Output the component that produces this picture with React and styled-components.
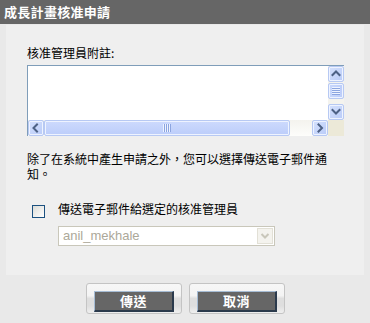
import React from "react";
import styled, { createGlobalStyle } from "styled-components";

const Global = createGlobalStyle`
  html, body { margin: 0; padding: 0; background: #e9e9e9; }
  body { font-family: "Noto Sans CJK TC", "Liberation Sans", sans-serif; }
  * { box-sizing: border-box; }
`;

const Page = styled.div`
  width: 370px;
  height: 323px;
  background: #e9e9e9;
  display: flex;
  flex-direction: column;
`;

const Header = styled.div`
  height: 24px;
  background: #666666;
  color: #ffffff;
  font-weight: bold;
  font-size: 13px;
  line-height: 24px;
  padding-left: 4px;
  letter-spacing: 0.3px;
`;

const Body = styled.div`
  padding: 1px 6px 0 6px;
`;

const Panel = styled.div`
  height: 250px;
  background: #efefef;
  padding: 20px 0 0 21px;
  display: flex;
  flex-direction: column;
`;

const Label = styled.div`
  font-size: 12px;
  line-height: 16px;
  color: #000;
  margin-bottom: 4px;
`;

const TextBox = styled.div`
  display: grid;
  grid-template-columns: 300px 16px;
  grid-template-rows: 54px 16px;
  width: 317px;
  border-top: 1px solid #7f9db9;
  border-left: 1px solid #7f9db9;
  background: #ffffff;
`;

const TextArea = styled.div`
  background: #ffffff;
`;

const VBar = styled.div`
  display: flex;
  flex-direction: column;
  background: #f4f3ee;
`;

const HBar = styled.div`
  display: flex;
  background: linear-gradient(#f4f3ee, #fdfdfb);
`;

const Corner = styled.div`
  background: #ece9d8;
`;

const SBtn = styled.div`
  width: 16px;
  height: 16px;
  flex: none;
  border-radius: 2px;
  border: 1px solid #b7c9f3;
  box-shadow: inset 0 0 0 1px #eef3ff;
  background: linear-gradient(135deg, #d5e1fd, #b9cbf8);
  display: flex;
  align-items: center;
  justify-content: center;
`;

const Thumb = styled.div`
  flex: none;
  ${(p) => (p.$vertical ? "height: 16px; margin-top: 1px;" : "width: 246px;")}
  border-radius: 2px;
  border: 1px solid #b7c9f3;
  box-shadow: inset 0 0 0 1px #eef3ff;
  background: ${(p) =>
    p.$vertical
      ? "linear-gradient(90deg, #c9d8fc, #bccdfa)"
      : "linear-gradient(#cddafd, #bccdfa)"};
  display: flex;
  align-items: center;
  justify-content: center;
`;

const Track = styled.div`
  flex: 1;
`;

const Grip = ({ vertical }) =>
  vertical ? (
    <svg width="8" height="8" viewBox="0 0 8 8">
      {[0, 2, 4, 6].map((y) => (
        <line key={y} x1="0" x2="8" y1={y + 0.5} y2={y + 0.5} stroke="#eef3ff" strokeWidth="1" />
      ))}
      {[1, 3, 5, 7].map((y) => (
        <line key={y} x1="0" x2="8" y1={y + 0.5} y2={y + 0.5} stroke="#8ca5e0" strokeWidth="1" />
      ))}
    </svg>
  ) : (
    <svg width="8" height="8" viewBox="0 0 8 8">
      {[0, 2, 4, 6].map((x) => (
        <line key={x} y1="0" y2="8" x1={x + 0.5} x2={x + 0.5} stroke="#eef3ff" strokeWidth="1" />
      ))}
      {[1, 3, 5, 7].map((x) => (
        <line key={x} y1="0" y2="8" x1={x + 0.5} x2={x + 0.5} stroke="#8ca5e0" strokeWidth="1" />
      ))}
    </svg>
  );

const Arrow = ({ dir }) => {
  const paths = {
    up: "M1.5 6 L5 2.5 L8.5 6",
    down: "M1.5 3 L5 6.5 L8.5 3",
    left: "M6 1.5 L2.5 5 L6 8.5",
    right: "M3.5 1.5 L7 5 L3.5 8.5",
  };
  return (
    <svg width="10" height="10" viewBox="0 0 10 10">
      <path d={paths[dir]} fill="none" stroke="#4d6185" strokeWidth="2" strokeLinecap="square" />
    </svg>
  );
};

const Para = styled.p`
  margin: 15px 0 0 0;
  width: 305px;
  font-size: 12px;
  line-height: 15px;
  color: #000;
`;

const CheckRow = styled.div`
  display: flex;
  align-items: flex-start;
  margin-top: 21px;
  padding-left: 5px;
`;

const Check = styled.div`
  width: 13px;
  height: 13px;
  flex: none;
  margin-top: 3px;
  border: 1px solid #1c5180;
  background: linear-gradient(135deg, #dcdcd7, #ffffff);
`;

const CheckCol = styled.div`
  margin-left: 13px;
  display: flex;
  flex-direction: column;
`;

const CheckLabel = styled.div`
  font-size: 12px;
  line-height: 14px;
  color: #000;
`;

const Select = styled.div`
  margin-top: 10px;
  width: 217px;
  height: 20px;
  border: 1px solid #c9c7ba;
  background: #ffffff;
  display: flex;
  align-items: stretch;
`;

const SelectText = styled.div`
  flex: 1;
  font-family: "Liberation Sans", Arial, sans-serif;
  font-size: 13px;
  line-height: 18px;
  color: #aca899;
  padding-left: 4px;
`;

const SelectBtn = styled.div`
  width: 16px;
  margin: 1px;
  background: #f4f3ee;
  border: 1px solid #e2e0d6;
  display: flex;
  align-items: center;
  justify-content: center;
`;

const Footer = styled.div`
  display: flex;
  justify-content: center;
  gap: 7px;
  padding-top: 8px;
  padding-left: 1px;
`;

const BtnFrame = styled.div`
  width: 96px;
  height: 31px;
  border: 1px solid #c4c4c4;
  border-radius: 3px;
  padding: 7px 7px 1px 7px;
  background: linear-gradient(#f7f7f7 0%, #f3f3f3 40%, #dedede 50%, #dedede 75%, #efefef 100%);
`;

const Btn = styled.div`
  width: 80px;
  height: 21px;
  background: #666666;
  border-top: 1px solid #a6bcd4;
  border-left: 1px solid #a6bcd4;
  border-right: 2px solid #2b3a4c;
  border-bottom: 2px solid #2b3a4c;
  color: #ffffff;
  font-weight: bold;
  font-size: 13px;
  line-height: 17px;
  text-align: center;
  letter-spacing: 0.5px;
`;

export default function App() {
  return (
    <>
      <Global />
      <Page>
        <Header>成長計畫核准申請</Header>
        <Body>
          <Panel>
            <Label>核准管理員附註:</Label>
            <TextBox>
              <TextArea />
              <VBar>
                <SBtn><Arrow dir="up" /></SBtn>
                <Thumb $vertical><Grip vertical /></Thumb>
                <Track />
                <SBtn><Arrow dir="down" /></SBtn>
              </VBar>
              <HBar>
                <SBtn><Arrow dir="left" /></SBtn>
                <Thumb><Grip /></Thumb>
                <Track />
                <SBtn><Arrow dir="right" /></SBtn>
              </HBar>
              <Corner />
            </TextBox>
            <Para>除了在系統中產生申請之外，您可以選擇傳送電子郵件通知。</Para>
            <CheckRow>
              <Check />
              <CheckCol>
                <CheckLabel>傳送電子郵件給選定的核准管理員</CheckLabel>
                <Select>
                  <SelectText>anil_mekhale</SelectText>
                  <SelectBtn>
                    <svg width="10" height="8" viewBox="0 0 10 8">
                      <path d="M1.5 2 L5 5.5 L8.5 2" fill="none" stroke="#c9c7ba" strokeWidth="2" />
                    </svg>
                  </SelectBtn>
                </Select>
              </CheckCol>
            </CheckRow>
          </Panel>
        </Body>
        <Footer>
          <BtnFrame><Btn>傳送</Btn></BtnFrame>
          <BtnFrame><Btn>取消</Btn></BtnFrame>
        </Footer>
      </Page>
    </>
  );
}
